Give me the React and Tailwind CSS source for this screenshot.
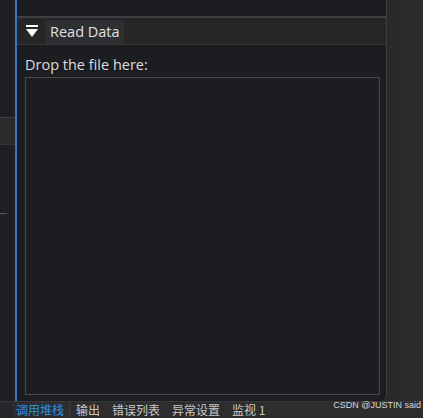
// App.jsx - debugger style "Read Data" dock panel
import React from 'react';

const tabs = ['调用堆栈', '输出', '错误列表', '异常设置', '监视 1'];

const CollapseIcon = () => (
    <svg width="12" height="13" viewBox="0 0 12 13" className="shrink-0">
        <rect x="0" y="0" width="12" height="2" fill="#ffffff" />
        <polygon points="0,4 12,4 6,12" fill="#ffffff" />
    </svg>
);

const App = () => {
    return (
        <div
            className="w-[423px] h-[418px] flex flex-col bg-[#2a2a2b] overflow-hidden"
            style={{ fontFamily: '"Open Sans", "Noto Sans", "Noto Sans CJK SC", sans-serif' }}
        >
            <div className="flex flex-1 min-h-0">
                {/* 왼쪽 도킹 영역 */}
                <div className="w-[15px] flex flex-col bg-[#1e1f22]">
                    <div className="h-[117px]" />
                    <div className="h-[1px] bg-[#3d3f45]" />
                    <div className="h-[26px] bg-[#2a2a2b]" />
                    <div className="h-[1px] bg-[#333438]" />
                    <div className="h-[68px]" />
                    <div className="h-[1px] w-[7px] bg-[#55575c]" />
                </div>
                <div className="w-[2px] bg-[#3a72c4]" />

                {/* 메인 패널 */}
                <div className="w-[370px] flex flex-col bg-[#1c1d20] border-r border-[#3c3d41] rounded-br-[6px]">
                    <div className="h-[18px] border-b-2 border-[#3d3f47]" />
                    <div className="h-[27px] flex items-end bg-[#262627] border-b border-[#353538]">
                        <div className="w-[29px] h-full flex items-center justify-center pl-[1px]">
                            <CollapseIcon />
                        </div>
                        <div className="h-[24px] px-[4px] flex items-center bg-[#2e2f31] rounded-t-[4px] text-[14.5px] text-[#e2e2e2]">
                            Read Data
                        </div>
                    </div>
                    <div className="flex-1 flex flex-col px-[8px] pb-[6px]">
                        <div className="h-[32px] pt-[10px] text-[14.5px] leading-[20px] text-[#dcdcdc]">
                            Drop the file here:
                        </div>
                        <div className="flex-1 mr-[-2px] border border-[#48494d]" />
                    </div>
                </div>

                <div className="flex-1 bg-gradient-to-r from-[#29292a] to-[#2c2c2d]" />
            </div>

            {/* 하단 탭 바 */}
            <div
                className="h-[17px] flex items-center bg-[#2d2d30] border-t border-[#38393c] text-[12px] leading-[16px] relative"
                style={{ fontFamily: '"Noto Sans CJK SC", "Noto Sans", sans-serif' }}
            >
                <div className="w-[13px] h-full bg-[#26262a]" />
                <div className="px-[3px] text-[#2f8fe0] border-r border-[#3c3c40] pr-[5px]">{tabs[0]}</div>
                {tabs.slice(1).map((t) => (
                    <div key={t} className="ml-[6px] mr-[6px] text-[#c8c8c8]">
                        {t}
                    </div>
                ))}
                <div
                    className="absolute right-[2px] top-[-5px] text-[9px] text-[#d8d8d8]"
                    style={{ fontFamily: '"Liberation Sans", Arial, sans-serif' }}
                >
                    CSDN @JUSTIN said
                </div>
            </div>
        </div>
    );
};

export default App;
